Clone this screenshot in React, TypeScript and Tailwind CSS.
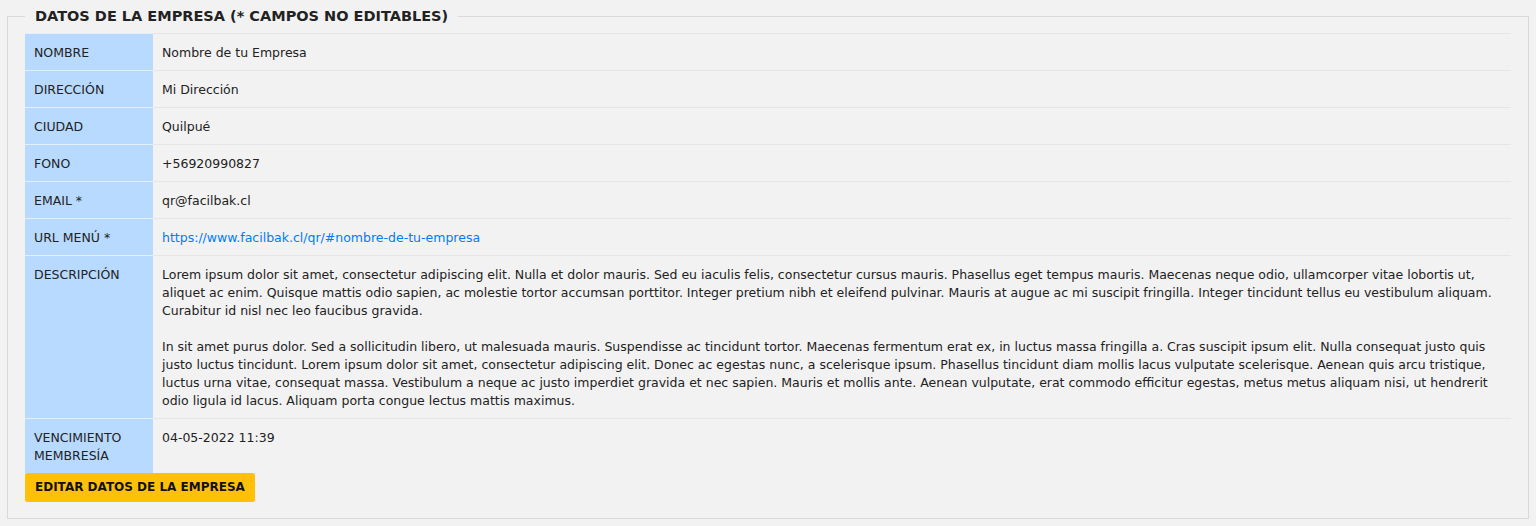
const rows: { label: string[]; value: React.ReactNode }[] = [
  { label: ['NOMBRE'], value: 'Nombre de tu Empresa' },
  { label: ['DIRECCIÓN'], value: 'Mi Dirección' },
  { label: ['CIUDAD'], value: 'Quilpué' },
  { label: ['FONO'], value: '+56920990827' },
  { label: ['EMAIL *'], value: 'qr@facilbak.cl' },
  {
    label: ['URL MENÚ *'],
    value: (
      <a href="#" className="text-[#007bff]">
        https://www.facilbak.cl/qr/#nombre-de-tu-empresa
      </a>
    ),
  },
  {
    label: ['DESCRIPCIÓN'],
    value: (
      <>
        <p>
          Lorem ipsum dolor sit amet, consectetur adipiscing elit. Nulla et dolor mauris. Sed eu iaculis felis, consectetur cursus mauris. Phasellus eget tempus mauris. Maecenas neque odio, ullamcorper vitae lobortis ut, aliquet ac enim. Quisque mattis odio sapien, ac molestie tortor accumsan porttitor. Integer pretium nibh et eleifend pulvinar. Mauris at augue ac mi suscipit fringilla. Integer tincidunt tellus eu vestibulum aliquam. Curabitur id nisl nec leo faucibus gravida.
        </p>
        <p className="mt-[18px]">
          In sit amet purus dolor. Sed a sollicitudin libero, ut malesuada mauris. Suspendisse ac tincidunt tortor. Maecenas fermentum erat ex, in luctus massa fringilla a. Cras suscipit ipsum elit. Nulla consequat justo quis justo luctus tincidunt. Lorem ipsum dolor sit amet, consectetur adipiscing elit. Donec ac egestas nunc, a scelerisque ipsum. Phasellus tincidunt diam mollis lacus vulputate scelerisque. Aenean quis arcu tristique, luctus urna vitae, consequat massa. Vestibulum a neque ac justo imperdiet gravida et nec sapien. Mauris et mollis ante. Aenean vulputate, erat commodo efficitur egestas, metus metus aliquam nisi, ut hendrerit odio ligula id lacus. Aliquam porta congue lectus mattis maximus.
        </p>
      </>
    ),
  },
  { label: ['VENCIMIENTO', 'MEMBRESÍA'], value: '04-05-2022 11:39' },
];

export default function App() {
  return (
    <div className="min-h-[526px] bg-[#f2f2f2] px-[7px] pt-[8px] pb-[7px] font-['DejaVu_Sans',Verdana,sans-serif] text-[12.5px] leading-[18px] text-[#222]">
      <fieldset className="border border-[#d9d9d9] px-[17px] pb-[16px]">
        <legend className="px-[10px] text-[14.5px] font-bold leading-[16px] text-[#222]">
          DATOS DE LA EMPRESA (* CAMPOS NO EDITABLES)
        </legend>

        <div className="mt-[9px]">
          {rows.map((row, i) => (
            <div key={i} className="grid grid-cols-[128px_1fr]">
              <div className="border-t border-[#e4efff] bg-[#b8daff] px-[9px] pt-[10px] pb-[8px]">
                {row.label.map((l) => (
                  <div key={l}>{l}</div>
                ))}
              </div>
              <div className="border-t border-[#e6e6e6] px-[9px] pt-[10px] pb-[8px]">{row.value}</div>
            </div>
          ))}
        </div>

        <button className="rounded-[2px] bg-[#ffc107] px-[10px] py-[6px] text-[12px] font-bold leading-[17px] text-[#111]">
          EDITAR DATOS DE LA EMPRESA
        </button>
      </fieldset>
    </div>
  );
}
